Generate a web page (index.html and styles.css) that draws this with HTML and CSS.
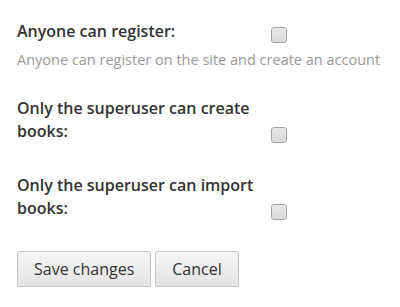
FILE: index.html
```html
<!doctype html>
<html>

<head>
    <meta charset="UTF-8">
    <title>Settings</title>
    <link rel="stylesheet" href="styles.css">
</head>

<body>
    <form class="settings">
        <div class="field has-help">
            <div class="field-row">
                <label class="field-label" for="register">Anyone can register:</label>
                <input type="checkbox" class="check" id="register">
            </div>
            <p class="help">Anyone can register on the site and create an account</p>
        </div>
        <div class="field">
            <div class="field-row">
                <label class="field-label" for="create">Only the superuser can create books:</label>
                <input type="checkbox" class="check" id="create">
            </div>
        </div>
        <div class="field">
            <div class="field-row">
                <label class="field-label" for="import">Only the superuser can import books:</label>
                <input type="checkbox" class="check" id="import">
            </div>
        </div>
        <div class="actions">
            <button type="button" class="btn">Save changes</button>
            <button type="button" class="btn">Cancel</button>
        </div>
    </form>
</body>

</html>
```

FILE: styles.css
```css
body {
    margin: 0;
    padding: 0;
    background: #fff;
    font-family: "Open Sans", sans-serif;
    color: #333;
}
* {
    box-sizing: border-box;
}
.settings {
    padding: 20px 17px 0 17px;
}
.field {
    margin-bottom: 31px;
}
.field.has-help {
    margin-bottom: 27px;
}
.field-row {
    display: flex;
    align-items: flex-end;
}
.field-label {
    width: 254px;
    font-size: 16px;
    font-weight: 600;
    line-height: 23px;
}
.check {
    -webkit-appearance: none;
    appearance: none;
    margin: 0 0 0 0;
    width: 16px;
    height: 16px;
    border: 1px solid #a3a3a3;
    border-radius: 3px;
    background: linear-gradient(#e8e8e8, #d8d8d8);
    box-shadow: inset 0 0 1px #fff;
}
.help {
    margin: 7px 0 0 0;
    font-size: 14.5px;
    line-height: 20px;
    color: #999;
}

/** Boutons du bas */
.actions {
    display: flex;
    gap: 4px;
}
.btn {
    height: 36px;
    padding: 0 16px;
    font-family: inherit;
    font-size: 16px;
    color: #333;
    border: 1px solid #c8c8c8;
    border-radius: 2px;
    background: linear-gradient(#f6f6f6, #e3e3e3);
}
```
